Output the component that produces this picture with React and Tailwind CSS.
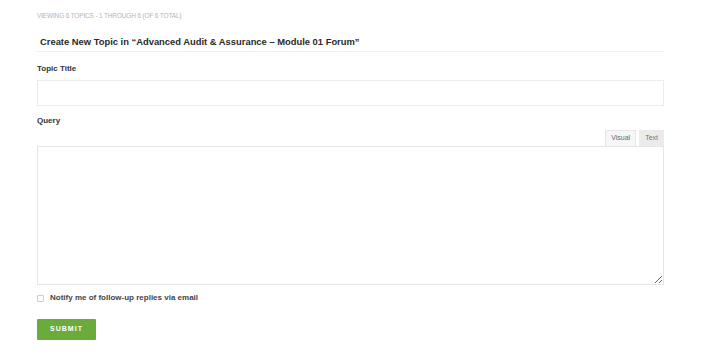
import React, { useState } from "react";

const App = () => {
  const [notify, setNotify] = useState(false);

  return (
    <div
      className="w-[702px] h-[363px] bg-white text-[#333]"
      style={{ fontFamily: "'Liberation Sans', Arial, sans-serif" }}
    >
      <div className="ml-[37px] w-[627px] pt-[12px]">
        <p className="text-[6.5px] uppercase leading-[8px] text-[#b5b5b5] tracking-tight">
          Viewing 6 topics - 1 through 6 (of 6 total)
        </p>

        <div className="mt-[16px] border-b border-[#f0f0f0] pb-[3px] pl-[3px]">
          <h2 className="text-[9.4px] font-bold leading-[12px] text-[#2a2a2a]">
            Create New Topic in “Advanced Audit &amp; Assurance – Module 01 Forum”
          </h2>
        </div>

        <label className="mt-[12px] block text-[8px] font-bold leading-[10px] text-[#333]">
          Topic Title
        </label>
        <input
          type="text"
          className="mt-[6px] block h-[26px] w-full border border-[#ececec] bg-white outline-none"
        />

        <label className="mt-[10px] block text-[8px] font-bold leading-[10px] text-[#333]">
          Query
        </label>

        <div className="mt-[4px] flex justify-end gap-[3px]">
          <button className="h-[16px] border border-b-0 border-[#e6e6e6] bg-[#f6f6f6] px-[5px] text-[7px] text-[#666]">
            Visual
          </button>
          <button className="h-[16px] bg-[#ebebeb] px-[6px] text-[7px] text-[#777]">
            Text
          </button>
        </div>
        <textarea className="block h-[139px] w-full resize-y border border-[#e6e6e6] bg-white outline-none" />

        <label className="mt-[8px] flex items-center gap-[6px]">
          <input
            type="checkbox"
            checked={notify}
            onChange={(e) => setNotify(e.target.checked)}
            className="h-[7px] w-[7px] appearance-none rounded-[1px] border border-[#cfcfcf] bg-white"
          />
          <span className="text-[8px] font-bold leading-[10px] text-[#444]">
            Notify me of follow-up replies via email
          </span>
        </label>

        <button className="mt-[16px] h-[21px] w-[59px] rounded-[1px] bg-[#6aab3b] text-[7px] font-bold uppercase tracking-[1px] text-white">
          Submit
        </button>
      </div>
    </div>
  );
};

export default App;
